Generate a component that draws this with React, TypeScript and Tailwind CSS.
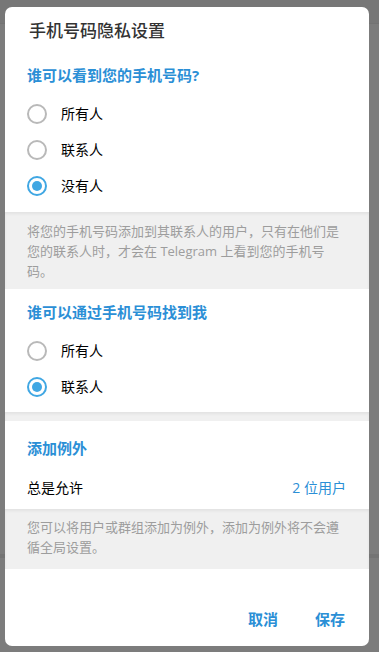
import React, { useState } from 'react'

type Option = { value: string; label: string }

function Radio({ checked, label, onClick }: { checked: boolean; label: string; onClick: () => void }) {
  return (
    <button type="button" onClick={onClick} className="flex h-[36px] w-full items-center gap-[14px] text-left">
      <span
        className={
          checked
            ? 'flex h-[20px] w-[20px] items-center justify-center rounded-full border-2 border-[#40a7e3]'
            : 'flex h-[20px] w-[20px] items-center justify-center rounded-full border-2 border-[#b9b9b9]'
        }
      >
        {checked && <span className="h-[10px] w-[10px] rounded-full bg-[#40a7e3]" />}
      </span>
      <span className="text-[14px] leading-[18px] text-black">{label}</span>
    </button>
  )
}

function Note({ children, className = '' }: { children: React.ReactNode; className?: string }) {
  return (
    <div
      className={
        'bg-[#f0f0f0] pl-[22px] pr-[26px] text-[13px] leading-[20px] text-[#9d9d9d] shadow-[inset_0_2px_3px_rgba(0,0,0,0.06)] ' +
        className
      }
    >
      {children}
    </div>
  )
}

const seeOptions: Option[] = [
  { value: 'all', label: '所有人' },
  { value: 'contacts', label: '联系人' },
  { value: 'nobody', label: '没有人' },
]

const findOptions: Option[] = [
  { value: 'all', label: '所有人' },
  { value: 'contacts', label: '联系人' },
]

export default function App() {
  const [see, setSee] = useState('nobody')
  const [find, setFind] = useState('contacts')

  return (
    <div
      className="relative h-[652px] w-full overflow-hidden bg-[#7c7c7c]"
      style={{ fontFamily: "'Open Sans', 'Noto Sans CJK SC', sans-serif" }}
    >
      {/* page behind the dialog */}
      <div className="h-[24px] border-b border-[#737373] bg-[#777777]" />
      <div className="h-[530px]" />
      <div className="h-[4px] bg-[#747474]" />

      <div className="absolute left-[5px] top-[7px] flex h-[639px] w-[364px] flex-col overflow-hidden rounded-[7px] bg-white">
        <div className="px-[24px] pt-[15px] text-[17px] font-medium leading-[18px] text-[#333]">手机号码隐私设置</div>

        <div className="px-[22px] pb-[8px] pt-[26px]">
          <div className="mb-[12px] text-[15px] font-bold leading-[18px] text-[#2b8fd6]">谁可以看到您的手机号码?</div>
          {seeOptions.map((o) => (
            <Radio key={o.value} label={o.label} checked={see === o.value} onClick={() => setSee(o.value)} />
          ))}
        </div>

        <Note className="h-[77px] pt-[9px]">
          将您的手机号码添加到其联系人的用户，只有在他们是您的联系人时，才会在 Telegram 上看到您的手机号码。
        </Note>

        <div className="px-[22px] pb-[7px] pt-[14px]">
          <div className="mb-[12px] text-[15px] font-bold leading-[18px] text-[#2b8fd6]">谁可以通过手机号码找到我</div>
          {findOptions.map((o) => (
            <Radio key={o.value} label={o.label} checked={find === o.value} onClick={() => setFind(o.value)} />
          ))}
        </div>

        <div className="h-[9px] bg-[#f0f0f0] shadow-[inset_0_2px_3px_rgba(0,0,0,0.06)]" />

        <div className="pb-[4px] pl-[22px] pr-[23px] pt-[18px]">
          <div className="mb-[12px] text-[15px] font-bold leading-[18px] text-[#2b8fd6]">添加例外</div>
          <div className="flex h-[36px] items-center justify-between text-[14px]">
            <span className="text-black">总是允许</span>
            <span className="text-[#2b8fd6]">2 位用户</span>
          </div>
        </div>

        <Note className="h-[60px] pt-[8px] leading-[19px]">
          您可以将用户或群组添加为例外，添加为例外将不会遵循全局设置。
        </Note>

        <div className="flex flex-1 items-center justify-end gap-[37px] pr-[24px] pt-[24px]">
          <button type="button" className="text-[15px] font-bold text-[#2b8fd6]">取消</button>
          <button type="button" className="text-[15px] font-bold text-[#2b8fd6]">保存</button>
        </div>
      </div>
    </div>
  )
}
